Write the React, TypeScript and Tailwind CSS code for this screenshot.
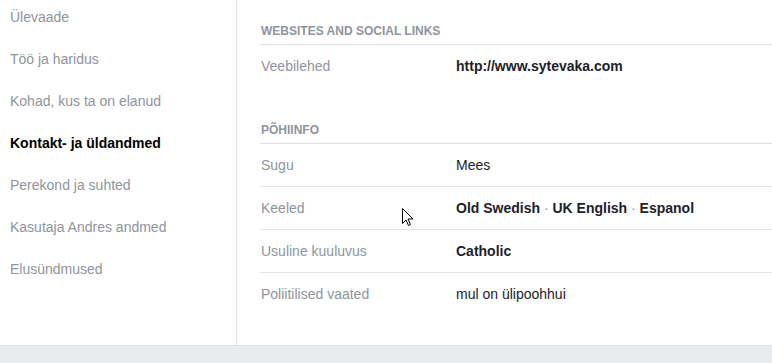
import React from 'react';

const navItems = [
  { label: 'Ülevaade' },
  { label: 'Töö ja haridus' },
  { label: 'Kohad, kus ta on elanud' },
  { label: 'Kontakt- ja üldandmed', active: true },
  { label: 'Perekond ja suhted' },
  { label: 'Kasutaja Andres andmed' },
  { label: 'Elusündmused' },
];

function Row({ label, children, last }: { label: string; children: React.ReactNode; last?: boolean }) {
  return (
    <div className={`flex items-center ${last ? 'h-[42px]' : 'h-[43px] border-b border-[#e5e5e5]'}`}>
      <div className="w-[196px] pl-[1px] text-[#90949c]">{label}</div>
      <div className="text-[#1d2129]">{children}</div>
    </div>
  );
}

function Dot() {
  return <span className="text-[#90949c] font-normal"> · </span>;
}

export default function App() {
  return (
    <div
      className="w-[772px] h-[363px] bg-white flex flex-col overflow-hidden relative text-[14px]"
      style={{ fontFamily: '"Liberation Sans", Arial, sans-serif' }}
    >
      <div className="flex flex-1 min-h-0">
        <nav className="w-[237px] border-r border-[#dddfe2] pt-[8px] pl-[10px]">
          {navItems.map((item) => (
            <div
              key={item.label}
              className={`leading-[18px] mb-[24px] ${item.active ? 'font-bold text-black' : 'text-[#90949c]'}`}
            >
              {item.label}
            </div>
          ))}
        </nav>

        <div className="flex-1 pl-[23px]">
          <div className="pt-[23px] pb-[5px] border-b border-[#dddfe2] text-[12px] leading-[16px] font-bold text-[#90949c] pl-[1px]">
            WEBSITES AND SOCIAL LINKS
          </div>
          <Row label="Veebilehed" last>
            <span className="font-bold">http://www.sytevaka.com</span>
          </Row>

          <div className="pt-[35px] pb-[5px] border-b border-[#dddfe2] text-[12px] leading-[16px] font-bold text-[#90949c] pl-[1px]">
            PÕHIINFO
          </div>
          <Row label="Sugu">Mees</Row>
          <Row label="Keeled">
            <span className="font-bold">
              Old Swedish<Dot />UK English<Dot />Espanol
            </span>
          </Row>
          <Row label="Usuline kuuluvus">
            <span className="font-bold">Catholic</span>
          </Row>
          <Row label="Poliitilised vaated" last>
            mul on ülipoohhui
          </Row>
        </div>
      </div>

      <div className="h-[18px] border-t border-[#dddfe2] bg-[#e9ebee]" />

      <svg
        className="absolute left-[401px] top-[207px]"
        width="13"
        height="20"
        viewBox="0 0 13 20"
      >
        <path
          d="M1.5 1.5 L1.5 16.5 L5 13 L7.5 18.5 L9.5 17.5 L7 12 L12 12 Z"
          fill="white"
          stroke="black"
          strokeWidth="1"
          strokeLinejoin="miter"
        />
      </svg>
    </div>
  );
}
